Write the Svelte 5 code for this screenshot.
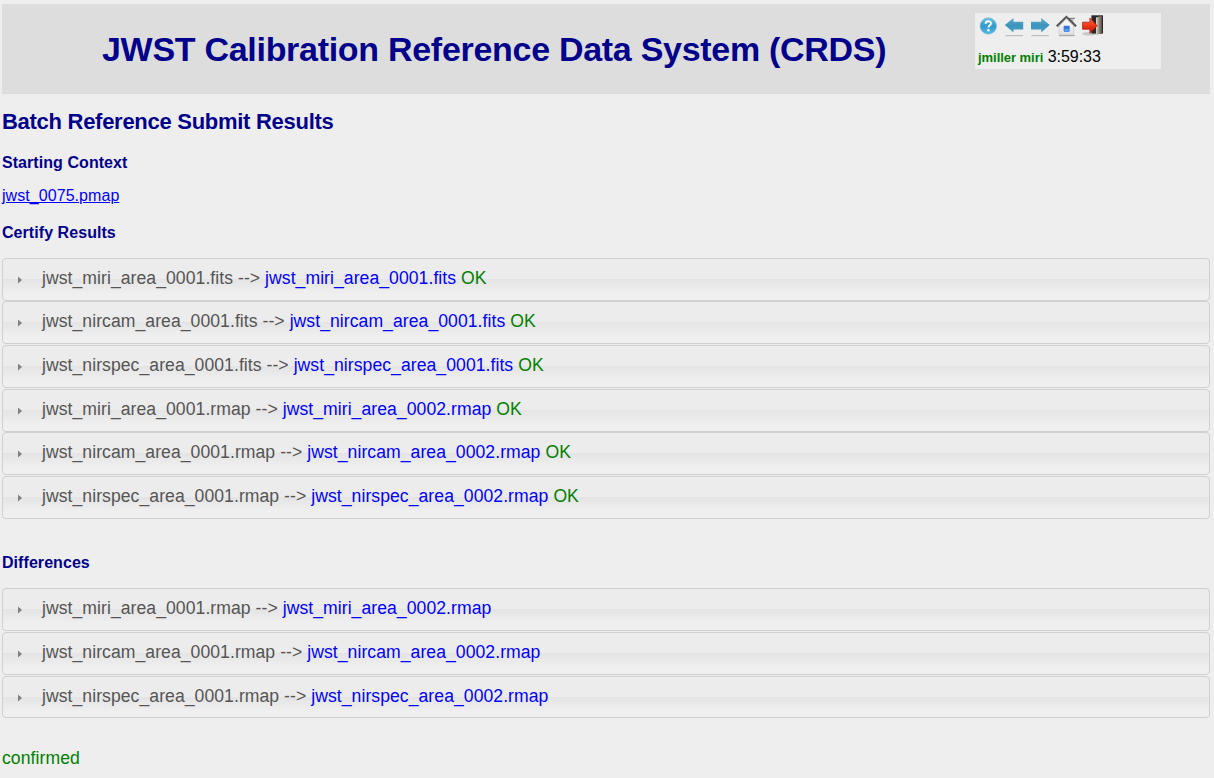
<script>
  const certify = [
    ['jwst_miri_area_0001.fits', 'jwst_miri_area_0001.fits'],
    ['jwst_nircam_area_0001.fits', 'jwst_nircam_area_0001.fits'],
    ['jwst_nirspec_area_0001.fits', 'jwst_nirspec_area_0001.fits'],
    ['jwst_miri_area_0001.rmap', 'jwst_miri_area_0002.rmap'],
    ['jwst_nircam_area_0001.rmap', 'jwst_nircam_area_0002.rmap'],
    ['jwst_nirspec_area_0001.rmap', 'jwst_nirspec_area_0002.rmap']
  ];
  const differences = certify.slice(3);
</script>

{#snippet rows(items, ok)}
  <div class="accordion" class:tight={ok}>
    {#each items as [from, to]}
      <div class="row">
        <svg class="caret" width="4" height="8" viewBox="0 0 4 8"><path d="M0 .6 4 4 0 7.4z" fill="#808080" /></svg>
        <span class="label">{from} --&gt; <a href="#top">{to}</a>{#if ok}{' '}<span class="ok">OK</span>{/if}</span>
      </div>
    {/each}
  </div>
{/snippet}

<div class="page">
  <header>
    <h1>JWST Calibration Reference Data System (CRDS)</h1>
    <div class="panel">
      <div class="icons">
        <svg width="20" height="24" viewBox="0 0 20 24">
          <defs>
            <linearGradient id="help" x2="0" y2="1"><stop stop-color="#6ac2e6" /><stop offset=".5" stop-color="#3299cb" /><stop offset="1" stop-color="#50bce8" /></linearGradient>
          </defs>
          <circle cx="10.3" cy="13" r="8.3" fill="url(#help)" stroke="#8fbdd3" stroke-width=".6" />
          <path d="M7.6 10.8c0-3.4 5.6-3.4 5.4-.2-.1 1.9-2.5 1.7-2.5 4" fill="none" stroke="#fff" stroke-width="1.9" />
          <circle cx="10.4" cy="17.3" r="1.25" fill="#fff" />
        </svg>
        <svg width="20" height="24" viewBox="0 0 20 24">
          <defs><linearGradient id="arrow" x2="0" y2="1"><stop stop-color="#61adc9" /><stop offset=".5" stop-color="#3c94bd" /><stop offset="1" stop-color="#4b9fc7" /></linearGradient></defs>
          <path d="M.8 12 9.5 5v3.8h9.7v7.7H9.5V19.5z" fill="url(#arrow)" />
          <path d="M1.5 22.6h17.5" stroke="#bababa" stroke-width="1.1" />
        </svg>
        <svg width="20" height="24" viewBox="0 0 20 24">
          <path d="M19.7 12 11.2 5v3.8H1v7.7h10.2V19.5z" fill="url(#arrow)" />
          <path d="M1.4 22.6h17.5" stroke="#bababa" stroke-width="1.1" />
        </svg>
        <svg width="22" height="24" viewBox="0 0 22 24">
          <defs>
            <linearGradient id="wall" x2="0" y2="1"><stop stop-color="#fff" /><stop offset="1" stop-color="#dedede" /></linearGradient>
            <linearGradient id="window" x2="0" y2="1"><stop stop-color="#174fc8" /><stop offset="1" stop-color="#65c0fb" /></linearGradient>
          </defs>
          <path d="M15 5h3.5v7.8L15 9.5z" fill="#b7b7b7" /><path d="M14 5.4h6" stroke="#888" stroke-width="1.2" />
          <path d="M4 12.4 11.4 5.3l7.4 7.1v9.2H4z" fill="url(#wall)" stroke="#c7c7c7" stroke-width=".6" />
          <path d="m1.7 13.2 9.7-9.3 9.7 9.3" fill="none" stroke="#555" stroke-width="2" />
          <path d="m3 14 8.4-8.1 8.4 8.1" fill="none" stroke="#aaa" stroke-width=".7" />
          <path d="M8.2 12.6h6.4v6.5H8.2z" fill="#fff" /><path d="M9 13.2h5.2v5.2H9z" fill="url(#window)" stroke="#3f78d8" stroke-width=".9" />
          <path d="M3.8 22.6h15.8" stroke="#a7a7a7" stroke-width="1.1" />
        </svg>
        <svg width="24" height="24" viewBox="0 0 24 24">
          <defs>
            <linearGradient id="exit" x2="0" y2="1"><stop stop-color="#ff7354" /><stop offset=".5" stop-color="#f03616" /><stop offset="1" stop-color="#ae1b0d" /></linearGradient>
            <linearGradient id="door"><stop stop-color="#e0d9cc" /><stop offset=".45" stop-color="#989285" /><stop offset="1" stop-color="#514b43" /></linearGradient>
          </defs>
          <ellipse cx="9.5" cy="20.8" rx="7.5" ry="1.8" fill="#aaa" opacity=".55" />
          <path d="M11.4 2.3h11.6v18.3H11.4z" fill="#292929" />
          <path d="m16 4.6 6-1.8v17.4l-6 1.8z" fill="url(#door)" />
          <path d="M2.6 9.2h7.3V5.1l7.2 7.6-7.2 7.6v-4.1H2.6z" fill="url(#exit)" stroke="#b51b10" stroke-width=".8" />
        </svg>
      </div>
      <div class="session"><b>jmiller miri</b> <span>3:59:33</span></div>
    </div>
  </header>
  <h2>Batch Reference Submit Results</h2>
  <h3>Starting Context</h3>
  <p class="context"><a href="#top">jwst_0075.pmap</a></p>
  <h3 class="certify">Certify Results</h3>
  {@render rows(certify, true)}
  <h3 class="differences">Differences</h3>
  {@render rows(differences, false)}
  <p class="confirmed">confirmed</p>
</div>

<style>
  :global(body) { background: #eee; }
  .page { height: 778px; box-sizing: border-box; padding: 4px 4px 0 2px; overflow: hidden; font-family: "Liberation Sans", Arial, sans-serif; font-size: 16px; color: #000; }
  header { height: 90px; background: #ddd; display: flex; }
  h1, h2, h3, p { margin: 0; white-space: nowrap; }
  h1, h2, h3 { color: #00008b; }
  h1 { width: 873px; margin-left: 100px; font-size: 34px; letter-spacing: -.29px; line-height: 40px; padding-top: 25px; box-sizing: border-box; }
  .panel { width: 186px; height: 56px; margin-top: 9px; background: #eee; }
  .icons { display: flex; height: 24px; gap: 6px; padding-left: 3px; }
  .icons svg { flex: none; }
  .icons svg:nth-child(4) { margin-left: -1px; }
  .icons svg:nth-child(5) { margin-left: -3px; }
  .session { line-height: 20px; margin-top: 10px; padding-left: 3px; white-space: nowrap; letter-spacing: -.04px; }
  .session b { color: #008000; font-size: 13px; }
  h2 { font-size: 22px; letter-spacing: -.28px; line-height: 26px; margin-top: 15px; }
  h3 { font-size: 16px; letter-spacing: .06px; line-height: 20px; margin-top: 18px; }
  a { color: #00f; }
  .context { line-height: 20px; margin-top: 13px; letter-spacing: .06px; }
  .certify { margin-top: 17px; }
  .accordion { margin-top: 15px; }
  .row { box-sizing: border-box; height: 43px; margin-top: 1px; border: 1px solid #d0d0d0; border-radius: 4px; display: flex; align-items: center; background: linear-gradient(#ececec 0 20px, #e4e4e4 20px, #efefef 34px, #f0f0f0); color: #555; font-size: 17.6px; letter-spacing: .055px; }
  .row:first-child, .tight .row:nth-child(3n + 2) { margin-top: 0; }
  .accordion:not(.tight) .row:last-child { height: 42px; }
  .caret { margin-left: 15px; margin-top: 1px; flex: none; }
  .label { margin-left: 20px; line-height: 22px; padding-bottom: 3px; white-space: nowrap; }
  .row a { text-decoration: none; }
  .ok, .confirmed { color: #008000; }
  .differences { margin-top: 34px; }
  .confirmed { font-size: 17.6px; letter-spacing: .065px; line-height: 22px; margin-top: 29px; }
</style>
